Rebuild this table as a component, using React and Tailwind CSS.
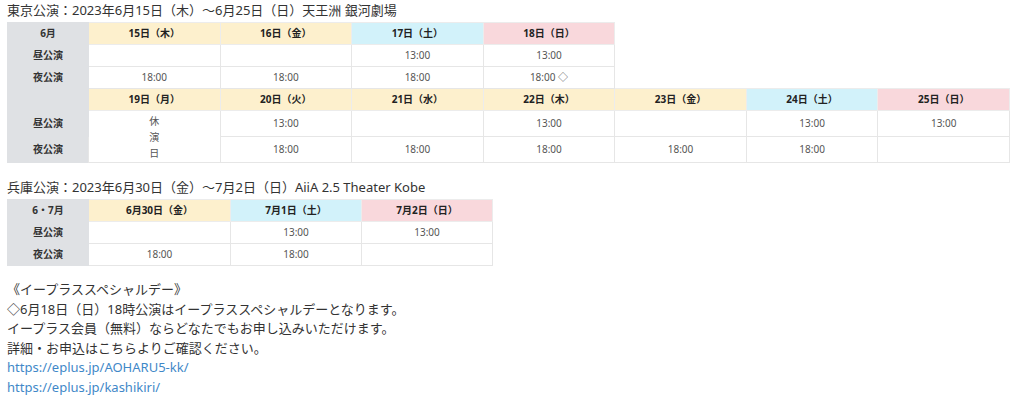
import React from 'react';

const FONT = { fontFamily: '"Noto Sans", "Noto Sans CJK JP", sans-serif' };

const bgByType = {
  y: 'bg-[#fdf0cd]',
  b: 'bg-[#d2f2fa]',
  p: 'bg-[#f9d8dc]',
};

const Side = ({ children }) => (
  <th className="border border-[#dfe1e4] bg-[#dfe1e4] text-[10px] font-bold text-[#333]">{children}</th>
);

const Head = ({ type, children }) => (
  <th className={`border border-[#ececec] text-[10px] font-bold text-[#222] ${bgByType[type]}`}>{children}</th>
);

const Cell = ({ children, ...rest }) => (
  <td {...rest} className="border border-[#e6e6e6] bg-white text-center text-[10px] text-[#555]">
    {children}
  </td>
);

const Blank = ({ span }) => <td colSpan={span}></td>;

export default function App() {
  return (
    <div className="bg-white px-[7px] text-[13px] text-[#333]" style={FONT}>
      <div className="h-5 leading-5 mb-[2px]">東京公演：2023年6月15日（木）〜6月25日（日）天王洲 銀河劇場</div>

      <table className="w-[1003px] table-fixed border-collapse">
        <colgroup>
          <col className="w-[81px]" />
          <col /><col /><col /><col /><col /><col /><col />
        </colgroup>
        <tbody>
          <tr className="h-[22px]">
            <Side>6月</Side>
            <Head type="y">15日（木）</Head>
            <Head type="y">16日（金）</Head>
            <Head type="b">17日（土）</Head>
            <Head type="p">18日（日）</Head>
            <Blank span={3} />
          </tr>
          <tr className="h-[22px]">
            <Side>昼公演</Side>
            <Cell></Cell>
            <Cell></Cell>
            <Cell>13:00</Cell>
            <Cell>13:00</Cell>
            <Blank span={3} />
          </tr>
          <tr className="h-[22px]">
            <Side>夜公演</Side>
            <Cell>18:00</Cell>
            <Cell>18:00</Cell>
            <Cell>18:00</Cell>
            <Cell>18:00 ◇</Cell>
            <Blank span={3} />
          </tr>
          <tr className="h-[22px]">
            <Side></Side>
            <Head type="y">19日（月）</Head>
            <Head type="y">20日（火）</Head>
            <Head type="y">21日（水）</Head>
            <Head type="y">22日（木）</Head>
            <Head type="y">23日（金）</Head>
            <Head type="b">24日（土）</Head>
            <Head type="p">25日（日）</Head>
          </tr>
          <tr className="h-[26px]">
            <Side>昼公演</Side>
            <Cell rowSpan={2}>
              <div className="leading-[16px]">休<br />演<br />日</div>
            </Cell>
            <Cell>13:00</Cell>
            <Cell></Cell>
            <Cell>13:00</Cell>
            <Cell></Cell>
            <Cell>13:00</Cell>
            <Cell>13:00</Cell>
          </tr>
          <tr className="h-[26px]">
            <Side>夜公演</Side>
            <Cell>18:00</Cell>
            <Cell>18:00</Cell>
            <Cell>18:00</Cell>
            <Cell>18:00</Cell>
            <Cell>18:00</Cell>
            <Cell></Cell>
          </tr>
        </tbody>
      </table>

      <div className="h-5 leading-5 mt-[14px] mb-[2px]">兵庫公演：2023年6月30日（金）〜7月2日（日）AiiA 2.5 Theater Kobe</div>

      <table className="w-[485px] table-fixed border-collapse">
        <colgroup>
          <col className="w-[81px]" />
          <col className="w-[142px]" />
          <col className="w-[131px]" />
          <col className="w-[131px]" />
        </colgroup>
        <tbody>
          <tr className="h-[22px]">
            <Side>6・7月</Side>
            <Head type="y">6月30日（金）</Head>
            <Head type="b">7月1日（土）</Head>
            <Head type="p">7月2日（日）</Head>
          </tr>
          <tr className="h-[22px]">
            <Side>昼公演</Side>
            <Cell></Cell>
            <Cell>13:00</Cell>
            <Cell>13:00</Cell>
          </tr>
          <tr className="h-[22px]">
            <Side>夜公演</Side>
            <Cell>18:00</Cell>
            <Cell>18:00</Cell>
            <Cell></Cell>
          </tr>
        </tbody>
      </table>

      <div className="mt-[14px] leading-[19.6px]">
        <p>《イープラススペシャルデー》</p>
        <p>◇6月18日（日）18時公演はイープラススペシャルデーとなります。</p>
        <p>イープラス会員（無料）ならどなたでもお申し込みいただけます。</p>
        <p>詳細・お申込はこちらよりご確認ください。</p>
        <p><a href="#" className="text-[#3f88c8]">https://eplus.jp/AOHARU5-kk/</a></p>
        <p><a href="#" className="text-[#3f88c8]">https://eplus.jp/kashikiri/</a></p>
      </div>
    </div>
  );
}
